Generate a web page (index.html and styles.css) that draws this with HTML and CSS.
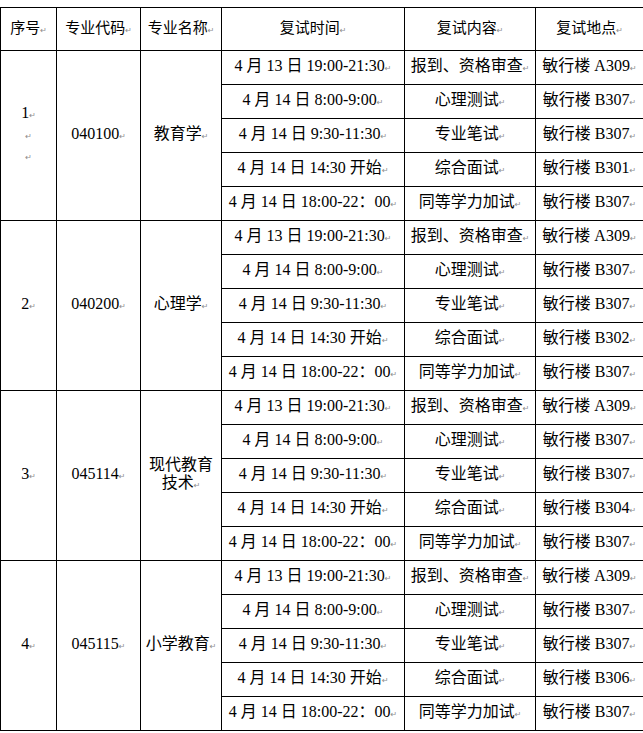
FILE: index.html
```html
<!DOCTYPE html>
<html lang="zh">
<head>
<meta charset="utf-8">
<title>复试安排</title>
<link rel="stylesheet" href="styles.css">
</head>
<body>
<table class="sched">
  <colgroup>
    <col class="c1"><col class="c2"><col class="c3"><col class="c4"><col class="c5"><col class="c6">
  </colgroup>
  <thead>
    <tr class="head">
      <th>序号<span class="pm">↵</span></th>
      <th>专业代码<span class="pm">↵</span></th>
      <th>专业名称<span class="pm">↵</span></th>
      <th>复试时间<span class="pm">↵</span></th>
      <th>复试内容<span class="pm">↵</span></th>
      <th>复试地点<span class="pm">↵</span></th>
    </tr>
  </thead>
  <tbody>
    <tr>
      <td rowspan="5" class="no">1<span class="pm">↵</span><br><span class="pm">↵</span><br><span class="pm">↵</span></td>
      <td rowspan="5">040100<span class="pm">↵</span></td>
      <td rowspan="5">教育学<span class="pm">↵</span></td>
      <td>4 月 13 日 19:00-21:30<span class="pm">↵</span></td>
      <td>报到、资格审查<span class="pm">↵</span></td>
      <td>敏行楼 A309<span class="pm">↵</span></td>
    </tr>
    <tr><td>4 月 14 日 8:00-9:00<span class="pm">↵</span></td><td>心理测试<span class="pm">↵</span></td><td>敏行楼 B307<span class="pm">↵</span></td></tr>
    <tr><td>4 月 14 日 9:30-11:30<span class="pm">↵</span></td><td>专业笔试<span class="pm">↵</span></td><td>敏行楼 B307<span class="pm">↵</span></td></tr>
    <tr><td>4 月 14 日 14:30 开始<span class="pm">↵</span></td><td>综合面试<span class="pm">↵</span></td><td>敏行楼 B301<span class="pm">↵</span></td></tr>
    <tr><td>4 月 14 日 18:00-22：00<span class="pm">↵</span></td><td>同等学力加试<span class="pm">↵</span></td><td>敏行楼 B307<span class="pm">↵</span></td></tr>

    <tr>
      <td rowspan="5" class="no">2<span class="pm">↵</span></td>
      <td rowspan="5">040200<span class="pm">↵</span></td>
      <td rowspan="5">心理学<span class="pm">↵</span></td>
      <td>4 月 13 日 19:00-21:30<span class="pm">↵</span></td>
      <td>报到、资格审查<span class="pm">↵</span></td>
      <td>敏行楼 A309<span class="pm">↵</span></td>
    </tr>
    <tr><td>4 月 14 日 8:00-9:00<span class="pm">↵</span></td><td>心理测试<span class="pm">↵</span></td><td>敏行楼 B307<span class="pm">↵</span></td></tr>
    <tr><td>4 月 14 日 9:30-11:30<span class="pm">↵</span></td><td>专业笔试<span class="pm">↵</span></td><td>敏行楼 B307<span class="pm">↵</span></td></tr>
    <tr><td>4 月 14 日 14:30 开始<span class="pm">↵</span></td><td>综合面试<span class="pm">↵</span></td><td>敏行楼 B302<span class="pm">↵</span></td></tr>
    <tr><td>4 月 14 日 18:00-22：00<span class="pm">↵</span></td><td>同等学力加试<span class="pm">↵</span></td><td>敏行楼 B307<span class="pm">↵</span></td></tr>

    <tr>
      <td rowspan="5" class="no">3<span class="pm">↵</span></td>
      <td rowspan="5">045114<span class="pm">↵</span></td>
      <td rowspan="5">现代教育<br>技术<span class="pm">↵</span></td>
      <td>4 月 13 日 19:00-21:30<span class="pm">↵</span></td>
      <td>报到、资格审查<span class="pm">↵</span></td>
      <td>敏行楼 A309<span class="pm">↵</span></td>
    </tr>
    <tr><td>4 月 14 日 8:00-9:00<span class="pm">↵</span></td><td>心理测试<span class="pm">↵</span></td><td>敏行楼 B307<span class="pm">↵</span></td></tr>
    <tr><td>4 月 14 日 9:30-11:30<span class="pm">↵</span></td><td>专业笔试<span class="pm">↵</span></td><td>敏行楼 B307<span class="pm">↵</span></td></tr>
    <tr><td>4 月 14 日 14:30 开始<span class="pm">↵</span></td><td>综合面试<span class="pm">↵</span></td><td>敏行楼 B304<span class="pm">↵</span></td></tr>
    <tr><td>4 月 14 日 18:00-22：00<span class="pm">↵</span></td><td>同等学力加试<span class="pm">↵</span></td><td>敏行楼 B307<span class="pm">↵</span></td></tr>

    <tr>
      <td rowspan="5" class="no">4<span class="pm">↵</span></td>
      <td rowspan="5">045115<span class="pm">↵</span></td>
      <td rowspan="5">小学教育<span class="pm">↵</span></td>
      <td>4 月 13 日 19:00-21:30<span class="pm">↵</span></td>
      <td>报到、资格审查<span class="pm">↵</span></td>
      <td>敏行楼 A309<span class="pm">↵</span></td>
    </tr>
    <tr><td>4 月 14 日 8:00-9:00<span class="pm">↵</span></td><td>心理测试<span class="pm">↵</span></td><td>敏行楼 B307<span class="pm">↵</span></td></tr>
    <tr><td>4 月 14 日 9:30-11:30<span class="pm">↵</span></td><td>专业笔试<span class="pm">↵</span></td><td>敏行楼 B307<span class="pm">↵</span></td></tr>
    <tr><td>4 月 14 日 14:30 开始<span class="pm">↵</span></td><td>综合面试<span class="pm">↵</span></td><td>敏行楼 B306<span class="pm">↵</span></td></tr>
    <tr><td>4 月 14 日 18:00-22：00<span class="pm">↵</span></td><td>同等学力加试<span class="pm">↵</span></td><td>敏行楼 B307<span class="pm">↵</span></td></tr>
  </tbody>
</table>
</body>
</html>
```

FILE: styles.css
```css
html, body {
  margin: 0;
  padding: 0;
  background: #fff;
}

body {
  padding-top: 7px;
  font-family: "Liberation Serif", "Noto Sans CJK SC", serif;
  font-size: 16px;
  color: #000;
}

.sched {
  border-collapse: collapse;
  table-layout: fixed;
  width: 643px;
}

.c1 { width: 56px; }
.c2 { width: 84px; }
.c3 { width: 81px; }
.c4 { width: 183px; }
.c5 { width: 131px; }
.c6 { width: 108px; }

.sched th,
.sched td {
  border: 1px solid #000;
  padding: 0 1px;
  text-align: center;
  vertical-align: middle;
  font-weight: normal;
  line-height: 18px;
  white-space: nowrap;
}

.sched .head th {
  height: 42px;
  font-family: "Noto Sans CJK SC", sans-serif;
  font-size: 15px;
}

.sched tbody tr {
  height: 34px;
}

.pm {
  font-family: "DejaVu Sans", sans-serif;
  font-size: 8px;
  color: #8c8c8c;
}

.no {
  padding-left: 4px;
}
```
